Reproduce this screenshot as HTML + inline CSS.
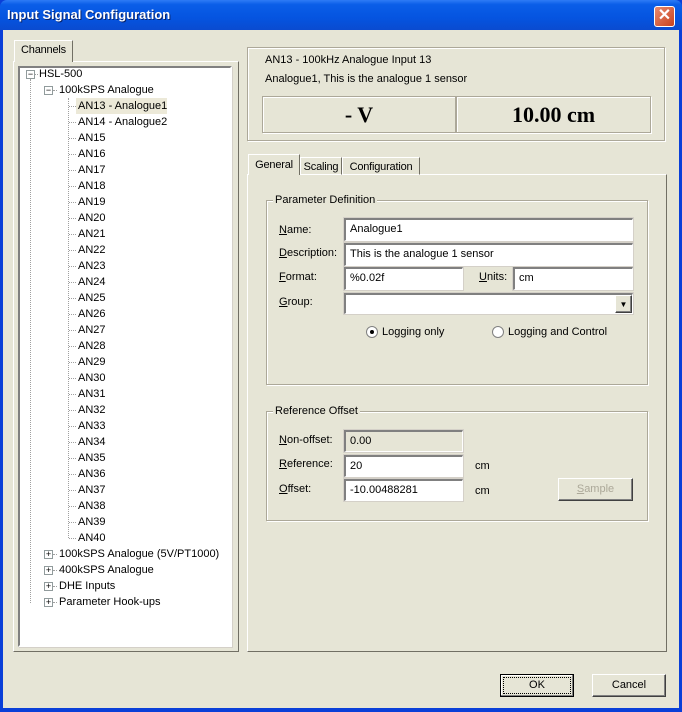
<!DOCTYPE html>
<html><head><meta charset="utf-8"><style>
*{box-sizing:border-box;margin:0;padding:0}
body{width:682px;height:712px;overflow:hidden;background:#0a3fd8;font-family:"Liberation Sans",Tahoma,sans-serif;font-size:11px;color:#000;position:relative}
.a{position:absolute}
#title{left:0;top:0;width:682px;height:30px;background:linear-gradient(#2e7bf5,#0a5ee8 15%,#0554e0 60%,#0a4bd0);border-radius:7px 7px 0 0}
#title span{position:absolute;left:7px;top:7px;color:#fff;font-weight:bold;font-size:13px;text-shadow:1px 1px #0a246a}
#close{left:654px;top:6px;width:21px;height:21px;background:linear-gradient(135deg,#e88a6e,#c8421e);border:1px solid #fff;border-radius:3px;color:#fff;font-weight:bold;font-size:16px;text-align:center;line-height:18px}
#client{left:3px;top:30px;width:676px;height:678px;background:#e6e5d6}
.sunk{background:#fff;border:1px solid;border-color:#7f9db9}
.box{border:1px solid #aca899;box-shadow:inset 1px 1px 0 #fff,1px 1px 0 #fff}
.tb{background:#fff;border-top:2px solid #808080;border-left:2px solid #808080;border-bottom:1px solid #fff;border-right:1px solid #fff;outline:1px solid #d4d0c8;padding:3px 0 0 4px;white-space:nowrap}
.tab{background:#e6e5d6;border:1px solid #fff;border-right-color:#716f64;border-bottom:none;padding:3px 0 0 0;text-align:center;white-space:nowrap;letter-spacing:-0.2px}
.btn{border:1px solid #fff;border-right-color:#404040;border-bottom-color:#404040;box-shadow:inset -1px -1px 0 #808080;text-align:center;line-height:20px;background:#e6e5d6}
u{text-decoration:underline}
.t{white-space:nowrap}
.pm{width:9px;height:9px;border:1px solid #919b9c;background:#fff;font-size:9px;line-height:7px;text-align:center;color:#000}
.dv{border-left:1px dotted #a0a0a0}
.dh{border-top:1px dotted #a0a0a0;height:0}
</style></head><body>
<div id="title" class="a"><span>Input Signal Configuration</span></div>
<div id="close" class="a">✕</div>
<div id="client" class="a"></div>

<div class="a" style="left:13px;top:61px;width:226px;height:591px;border:1px solid #fff;border-right-color:#716f64;border-bottom-color:#716f64"></div>
<div class="a tab" style="left:14px;top:40px;width:59px;height:22px;border-right:1px solid #716f64">Channels</div>
<div class="a" style="left:18px;top:66px;width:214px;height:581px;background:#fff;border:2px solid;border-color:#808080 #fff #fff #808080;box-shadow:1px 1px 0 #d4d0c8"></div>

<div class="a dv" style="left:30px;top:79px;height:524px"></div>
<div class="a dv" style="left:68px;top:98px;height:440px"></div>

<div class="a pm" style="left:26px;top:70px">−</div>
<div class="a dh" style="left:35px;top:74px;width:3px"></div>
<div class="a t" style="left:39px;top:68px">HSL-500</div>
<div class="a pm" style="left:44px;top:86px">−</div>
<div class="a dh" style="left:53px;top:90px;width:4px"></div>
<div class="a t" style="left:59px;top:84px">100kSPS Analogue</div>
<div class="a" style="left:76px;top:98px;width:91px;height:16px;background:#ece9d8"></div>
<div class="a t" style="left:78px;top:100px">AN13 - Analogue1</div>
<div class="a t" style="left:78px;top:116px">AN14 - Analogue2</div>
<div class="a t" style="left:78px;top:130px;line-height:16px">AN15<br>AN16<br>AN17<br>AN18<br>AN19<br>AN20<br>AN21<br>AN22<br>AN23<br>AN24<br>AN25<br>AN26<br>AN27<br>AN28<br>AN29<br>AN30<br>AN31<br>AN32<br>AN33<br>AN34<br>AN35<br>AN36<br>AN37<br>AN38<br>AN39<br>AN40</div>
<svg class="a" style="left:68px;top:98px" width="10" height="450"><g stroke="#a0a0a0" stroke-dasharray="1 1">
<path d="M1 8.5h7M1 24.5h7M1 40.5h7M1 56.5h7M1 72.5h7M1 88.5h7M1 104.5h7M1 120.5h7M1 136.5h7M1 152.5h7M1 168.5h7M1 184.5h7M1 200.5h7M1 216.5h7M1 232.5h7M1 248.5h7M1 264.5h7M1 280.5h7M1 296.5h7M1 312.5h7M1 328.5h7M1 344.5h7M1 360.5h7M1 376.5h7M1 392.5h7M1 408.5h7M1 424.5h7M1 440.5h7"/></g></svg>
<div class="a pm" style="left:44px;top:550px">+</div><div class="a dh" style="left:53px;top:554px;width:4px"></div><div class="a t" style="left:59px;top:548px">100kSPS Analogue (5V/PT1000)</div>
<div class="a pm" style="left:44px;top:566px">+</div><div class="a dh" style="left:53px;top:570px;width:4px"></div><div class="a t" style="left:59px;top:564px">400kSPS Analogue</div>
<div class="a pm" style="left:44px;top:582px">+</div><div class="a dh" style="left:53px;top:586px;width:4px"></div><div class="a t" style="left:59px;top:580px">DHE Inputs</div>
<div class="a pm" style="left:44px;top:598px">+</div><div class="a dh" style="left:53px;top:602px;width:4px"></div><div class="a t" style="left:59px;top:596px">Parameter Hook-ups</div>

<div class="a box" style="left:247px;top:47px;width:418px;height:94px"></div>
<div class="a t" style="left:265px;top:54px">AN13 - 100kHz Analogue Input 13</div>
<div class="a t" style="left:265px;top:73px">Analogue1, This is the analogue 1 sensor</div>
<div class="a box" style="left:262px;top:96px;width:194px;height:37px;font:bold 22px 'Liberation Serif',serif;text-align:center;line-height:35px">- V</div>
<div class="a box" style="left:456px;top:96px;width:195px;height:37px;font:bold 22px 'Liberation Serif',serif;text-align:center;line-height:35px">10.00 cm</div>

<div class="a" style="left:247px;top:174px;width:420px;height:478px;border:1px solid #fff;border-right-color:#716f64;border-bottom-color:#716f64"></div>
<div class="a tab" style="left:248px;top:154px;width:52px;height:21px;padding-top:4px">General</div>
<div class="a tab" style="left:300px;top:157px;width:42px;height:18px;border-bottom:1px solid #fff">Scaling</div>
<div class="a tab" style="left:342px;top:157px;width:78px;height:18px;border-bottom:1px solid #fff">Configuration</div>
<div class="a" style="left:249px;top:174px;width:50px;height:2px;background:#e6e5d6"></div>

<div class="a box" style="left:266px;top:200px;width:382px;height:185px"></div>
<div class="a t" style="left:273px;top:194px;background:#e6e5d6;padding:0 2px">Parameter Definition</div>
<div class="a t" style="left:279px;top:224px"><u>N</u>ame:</div>
<div class="a t" style="left:279px;top:247px"><u>D</u>escription:</div>
<div class="a t" style="left:279px;top:271px"><u>F</u>ormat:</div>
<div class="a t" style="left:479px;top:271px"><u>U</u>nits:</div>
<div class="a t" style="left:279px;top:296px"><u>G</u>roup:</div>
<div class="a tb" style="left:344px;top:218px;width:289px;height:23px">Analogue1</div>
<div class="a tb" style="left:344px;top:243px;width:289px;height:23px">This is the analogue 1 sensor</div>
<div class="a tb" style="left:344px;top:267px;width:119px;height:23px">%0.02f</div>
<div class="a tb" style="left:513px;top:267px;width:120px;height:23px">cm</div>
<div class="a tb" style="left:344px;top:293px;width:289px;height:21px"></div>
<div class="a btn" style="left:615px;top:295px;width:17px;height:18px;font-size:8px;line-height:17px">▼</div>
<div class="a" style="left:366px;top:326px;width:12px;height:12px;border-radius:50%;border:1px solid #808080;background:#fff"><div style="margin:3px;width:4px;height:4px;border-radius:50%;background:#000"></div></div>
<div class="a t" style="left:382px;top:326px">Logging only</div>
<div class="a" style="left:492px;top:326px;width:12px;height:12px;border-radius:50%;border:1px solid #808080;background:#fff"></div>
<div class="a t" style="left:508px;top:326px">Logging and Control</div>

<div class="a box" style="left:266px;top:411px;width:382px;height:110px"></div>
<div class="a t" style="left:273px;top:405px;background:#e6e5d6;padding:0 2px">Reference Offset</div>
<div class="a t" style="left:279px;top:434px"><u>N</u>on-offset:</div>
<div class="a t" style="left:279px;top:458px"><u>R</u>eference:</div>
<div class="a t" style="left:279px;top:483px"><u>O</u>ffset:</div>
<div class="a tb" style="left:344px;top:430px;width:119px;height:22px;background:#e6e5d6">0.00</div>
<div class="a tb" style="left:344px;top:455px;width:119px;height:22px">20</div>
<div class="a tb" style="left:344px;top:479px;width:119px;height:22px">-10.00488281</div>
<div class="a t" style="left:475px;top:460px">cm</div>
<div class="a t" style="left:475px;top:485px">cm</div>
<div class="a btn" style="left:558px;top:478px;width:75px;height:23px;color:#aca899"><u>S</u>ample</div>

<div class="a btn" style="left:500px;top:674px;width:74px;height:23px;border:1px solid #000;box-shadow:inset -1px -1px 0 #808080,inset 1px 1px 0 #fff"><div style="margin:2px;border:1px dotted #000;line-height:15px">OK</div></div>
<div class="a btn" style="left:592px;top:674px;width:74px;height:23px">Cancel</div>
</body></html>
